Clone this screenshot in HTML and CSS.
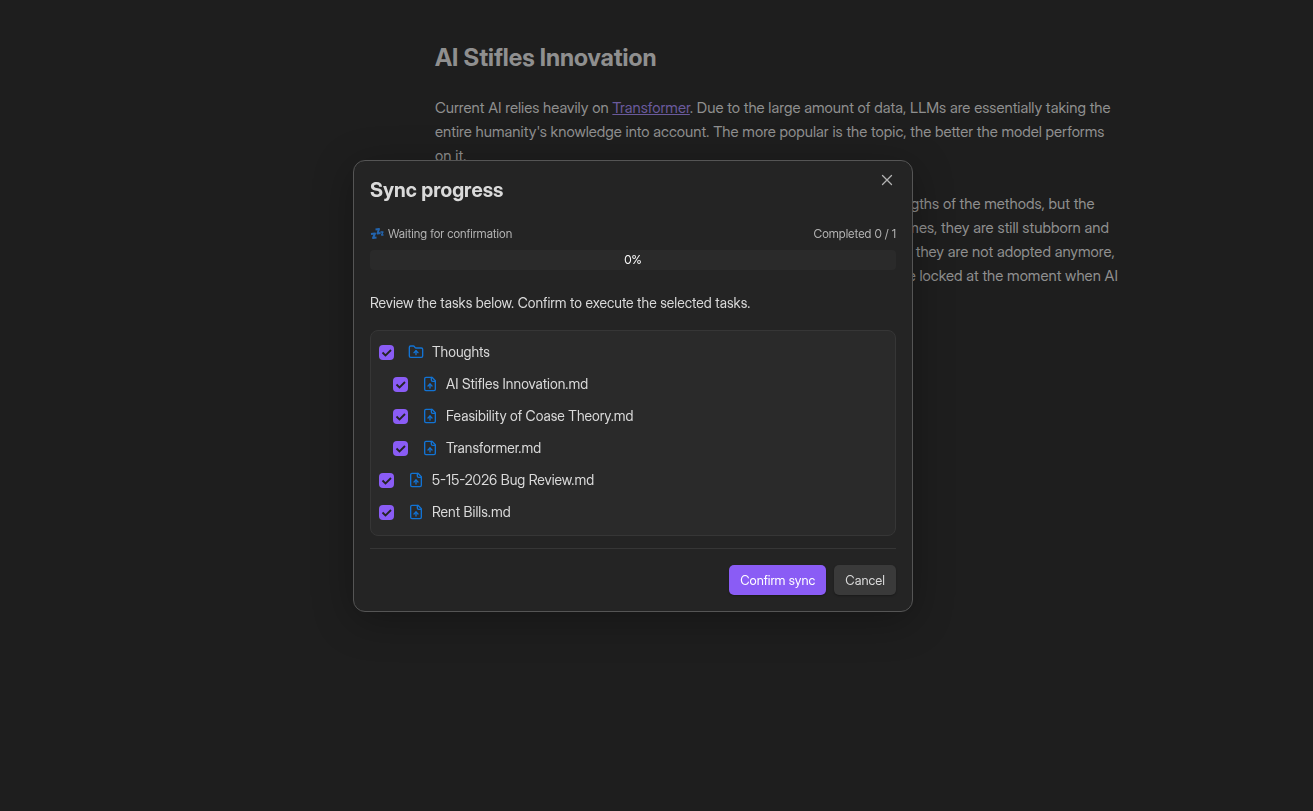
FILE: index.html
```
<!DOCTYPE html>
<html lang="en">
<head>
  <meta charset="UTF-8" />
  <meta name="viewport" content="width=device-width, initial-scale=1.0" />
  <title>AI Stifles Innovation</title>
  <link rel="stylesheet" href="styles.css">
</head>
<body>
  <!-- icons shared by the task rows -->
  <svg class="sprite" aria-hidden="true">
    <symbol id="folder-up" viewBox="0 0 24 24">
      <path d="M20 20a2 2 0 0 0 2-2V8a2 2 0 0 0-2-2h-7.900a2 2 0 0 1-1.690-.900L9.600 3.900A2 2 0 0 0 7.930 3H4a2 2 0 0 0-2 2v13a2 2 0 0 0 2 2Z" />
      <path d="M12 10v6" />
      <path d="m9 13 3-3 3 3" />
    </symbol>
    <symbol id="file-up" viewBox="0 0 24 24">
      <path d="M15 2H6a2 2 0 0 0-2 2v16a2 2 0 0 0 2 2h12a2 2 0 0 0 2-2V7Z" />
      <path d="M14 2v4a2 2 0 0 0 2 2h4" />
      <path d="M12 12v6" />
      <path d="m15 15-3-3-3 3" />
    </symbol>
  </svg>

  <main class="note">
    <h1 class="note-title">AI Stifles Innovation</h1>
    <p>Current AI relies heavily on <a href="#transformer">Transformer</a>. Due to the large amount of data, LLMs are essentially taking the<br>
      entire humanity's knowledge into account. The more popular is the topic, the better the model performs<br>
      on it.</p>
    <p>Researchers who study all of the new models might know about the strengths of the methods, but the<br>
      trained models rarely do. Even when they have been corrected multiple times, they are still stubborn and<br>
      go back to the most popular answer. The new methods will just fade out if they are not adopted anymore,<br>
      and nobody would ever try to improve them. All of the innovation would be locked at the moment when AI</p>
  </main>

  <div class="modal-container">
    <div class="modal" role="dialog" aria-labelledby="modalTitle">
      <button class="close-btn" aria-label="Close">
        <svg viewBox="0 0 24 24"><path d="M18 6 6 18M6 6l12 12" /></svg>
      </button>
      <h2 class="modal-title" id="modalTitle">Sync progress</h2>

      <div class="status">
        <span class="status-label">
          <svg class="zzz" viewBox="0 0 14 14" aria-hidden="true">
            <path d="M1 7l4-.5-2 4.500 3.500-.5" stroke-width="2" />
            <path d="M5.500 2.500l3.500-.5-1.500 4.500 3-.5" stroke-width="2" />
            <path d="M10.500 5h2.500l-1.500 3h2" stroke-width="1.300" />
          </svg>
          Waiting for confirmation
        </span>
        <span>Completed 0 / 1</span>
      </div>
      <div class="progress-bar" role="progressbar" aria-valuenow="0">0%</div>

      <p class="hint">Review the tasks below. Confirm to execute the selected tasks.</p>

      <div class="task-list">
        <label class="task">
          <input type="checkbox" checked>
          <svg class="icon"><use href="#folder-up" /></svg>
          Thoughts
        </label>
        <label class="task child">
          <input type="checkbox" checked>
          <svg class="icon"><use href="#file-up" /></svg>
          AI Stifles Innovation.md
        </label>
        <label class="task child">
          <input type="checkbox" checked>
          <svg class="icon"><use href="#file-up" /></svg>
          Feasibility of Coase Theory.md
        </label>
        <label class="task child">
          <input type="checkbox" checked>
          <svg class="icon"><use href="#file-up" /></svg>
          Transformer.md
        </label>
        <label class="task">
          <input type="checkbox" checked>
          <svg class="icon"><use href="#file-up" /></svg>
          5-15-2026 Bug Review.md
        </label>
        <label class="task">
          <input type="checkbox" checked>
          <svg class="icon"><use href="#file-up" /></svg>
          Rent Bills.md
        </label>
      </div>

      <div class="actions">
        <button class="btn primary">Confirm sync</button>
        <button class="btn">Cancel</button>
      </div>
    </div>
  </div>
</body>
</html>
```
FILE: styles.css
```
* {
  box-sizing: border-box;
}

body {
  margin: 0;
  min-height: 100vh;
  background: #1e1e1e;
  color: #8f8f8f;
  font-family: "Inter Display", Inter, sans-serif;
  font-size: 15px;
  line-height: 24px;
}

.sprite {
  display: none;
}

.note {
  max-width: 1135px;
  padding: 42px 0 0 435px;
  white-space: nowrap;
}

.note-title {
  margin: 0 0 22px;
  font-size: 24px;
  line-height: 32px;
  font-weight: 700;
}

.note p {
  margin: 0 0 24px;
}

.note a {
  color: #6a5a9c;
}

.modal-container {
  position: fixed;
  inset: 0;
  display: flex;
  align-items: center;
  justify-content: center;
  padding: 0 47px 39px 0;
}

.modal {
  position: relative;
  width: 560px;
  max-width: 100%;
  padding: 16px;
  background: #242424;
  border: 1px solid #555;
  border-radius: 12px;
  box-shadow: 0 8px 40px rgba(0, 0, 0, 0.3);
  color: #dadada;
}

.close-btn {
  position: absolute;
  top: 8px;
  right: 14px;
  width: 22px;
  height: 22px;
  padding: 2px;
  background: none;
  border: none;
  color: #b3b3b3;
  cursor: pointer;
}

.close-btn svg {
  display: block;
  width: 18px;
  height: 18px;
  fill: none;
  stroke: currentColor;
  stroke-width: 1.75;
  stroke-linecap: round;
}

.modal-title {
  margin: 0 0 22px;
  font-size: 20px;
  line-height: 26px;
  font-weight: 700;
}

.status {
  display: flex;
  justify-content: space-between;
  margin-bottom: 7px;
  color: #b3b3b3;
  font-size: 12px;
  line-height: 18px;
}

.status-label {
  display: flex;
  align-items: center;
  gap: 4px;
}

.zzz {
  width: 14px;
  height: 14px;
  fill: none;
  stroke: #2364ad;
  stroke-linejoin: round;
}

.progress-bar {
  height: 20px;
  background: #2a2a2a;
  border-radius: 4px;
  color: #fff;
  font-size: 12px;
  line-height: 20px;
  text-align: center;
}

.hint {
  margin: 21px 0 15px;
  font-size: 14px;
}

.task-list {
  padding: 5px 8px 7px;
  background: #2a2a2a;
  border: 1px solid #363636;
  border-radius: 8px;
}

.task {
  display: flex;
  align-items: center;
  height: 32px;
  font-size: 14px;
}

.task.child {
  padding-left: 14px;
}

.task input {
  appearance: none;
  width: 15px;
  height: 15px;
  margin: 0 14px 0 0;
  border: 1px solid #666;
  border-radius: 4px;
}

.task input:checked {
  border: none;
  background: #8a5cf5 url("data:image/svg+xml,%3Csvg xmlns='http://www.w3.org/2000/svg' viewBox='0 0 15 15'%3E%3Cpath d='M3.500 7.500l3 3L12 5' fill='none' stroke='%23242424' stroke-width='1.800'/%3E%3C/svg%3E");
}

.icon {
  width: 16px;
  height: 16px;
  margin-right: 8px;
  fill: none;
  stroke: #1273d4;
  stroke-width: 2;
  stroke-linecap: round;
  stroke-linejoin: round;
}

.actions {
  display: flex;
  justify-content: flex-end;
  gap: 8px;
  margin-top: 12px;
  padding-top: 16px;
  border-top: 1px solid #363636;
}

.btn {
  height: 30px;
  padding: 0 11px;
  background: #3a3a3a;
  border: none;
  border-radius: 5px;
  box-shadow: 0 1px 2px rgba(0, 0, 0, 0.3);
  color: #dadada;
  font-family: inherit;
  font-size: 13px;
  cursor: pointer;
}

.btn.primary {
  background: #8a5cf5;
  color: #fff;
}
```
